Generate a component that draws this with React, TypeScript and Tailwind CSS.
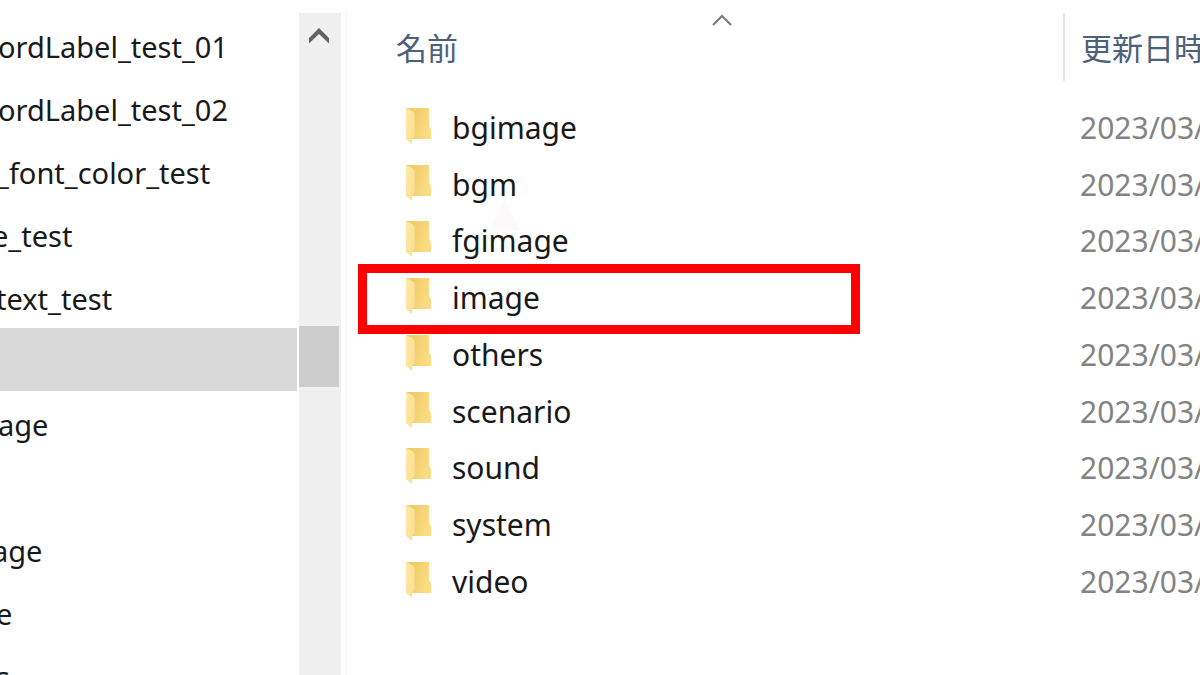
import React from "react";

type TreeItem = { label: string; offset: string; selected?: boolean };

const treeItems: TreeItem[] = [
  { label: "ordLabel_test_01", offset: "-ml-0.5" },
  { label: "ordLabel_test_02", offset: "-ml-0.5" },
  { label: "_font_color_test", offset: "-ml-1" },
  { label: "e_test", offset: "-ml-2" },
  { label: "text_test", offset: "-ml-1" },
  { label: "", offset: "-ml-1", selected: true },
  { label: "age", offset: "-ml-0.5" },
  { label: "", offset: "-ml-1" },
  { label: "age", offset: "-ml-2" },
  { label: "e", offset: "-ml-1" },
  { label: "s", offset: "-ml-1" },
];

const folders = [
  "bgimage",
  "bgm",
  "fgimage",
  "image",
  "others",
  "scenario",
  "sound",
  "system",
  "video",
];

const highlighted = "image";

function FolderIcon() {
  return (
    <svg width="26" height="37" viewBox="0 0 26 37" className="shrink-0" aria-hidden="true">
      <defs>
        <linearGradient id="folder-back" x1="0" y1="0" x2="1" y2="0.3">
          <stop offset="0.25" stopColor="#efcb67" />
          <stop offset="1" stopColor="#fbdc83" />
        </linearGradient>
        <linearGradient id="folder-front" x1="0" y1="0" x2="1" y2="1">
          <stop offset="0" stopColor="#ffe9a8" />
          <stop offset="1" stopColor="#fbdf90" />
        </linearGradient>
      </defs>
      <path d="M1 1H24V19L26 22V32H1Z" fill="url(#folder-back)" />
      <path d="M1 1L8 4.500Q9.500 5.500 9.500 7.500V29L7 32V37L1 32Z" fill="url(#folder-front)" />
    </svg>
  );
}

function Sidebar() {
  return (
    <nav aria-label="Folders" className="w-[297px] shrink-0 overflow-hidden text-[29px]">
      <ul>
        {treeItems.map((item, i) => (
          <li
            key={i}
            className={
              item.selected
                ? "flex h-[63px] items-center bg-[#d9d9d9] pt-1"
                : "flex h-[63px] items-center pt-1"
            }
          >
            <span className={`whitespace-nowrap ${item.offset}`}>{item.label}</span>
          </li>
        ))}
      </ul>
    </nav>
  );
}

function ScrollBar() {
  return (
    <div className="ml-0.5 flex w-[42px] shrink-0 flex-col bg-[#f0f0f0]">
      <button type="button" aria-label="Scroll up" className="flex h-[46px] w-10 items-center justify-center">
        <svg width="20" height="16" viewBox="0 0 20 16" aria-hidden="true">
          <path d="M0 10L10 0L20 10V15.500L10 6L0 15.500Z" fill="#606266" />
        </svg>
      </button>
      <div className="mt-[267px] h-[61px] w-10 bg-[#cdcdcd]" />
    </div>
  );
}

export default function App() {
  return (
    <div className="flex h-screen overflow-hidden bg-white pt-[13px] font-['Noto_Sans','Noto_Sans_CJK_JP',sans-serif] text-[30px] leading-10 text-[#191919]">
      <Sidebar />
      <ScrollBar />
      <main className="relative ml-1 min-w-0 flex-1 border-l-2 border-[#f6fafa] pl-[33px]">
        <svg
          width="30"
          height="32"
          viewBox="0 0 30 32"
          className="absolute left-[143px] top-[185px]"
          aria-hidden="true"
        >
          <path d="M14 0L30 32H0Z" fill="#fcfafa" />
        </svg>
        <table className="relative h-[595px] w-full table-fixed border-collapse">
          <colgroup>
            <col />
            <col className="w-[137px]" />
          </colgroup>
          <thead>
            <tr className="h-[84px] text-left align-top text-[31px] text-[#4c607a]">
              <th scope="col" className="relative p-0 font-normal">
                <svg
                  width="20"
                  height="12"
                  viewBox="0 0 20 12"
                  className="absolute left-1/2 top-px -ml-2.5"
                  aria-hidden="true"
                >
                  <path d="M1 11L10 2L19 11" fill="none" stroke="#77797c" strokeWidth="2" />
                </svg>
                <div className="flex h-[68px] items-center pl-4 pt-0.5">名前</div>
              </th>
              <th scope="col" className="overflow-hidden p-0 font-normal">
                <div className="flex h-[68px] items-center whitespace-nowrap border-l-2 border-[#e5e5e5] pl-4 pt-0.5">
                  更新日時
                </div>
              </th>
            </tr>
          </thead>
          <tbody>
            {folders.map((name) => (
              <tr key={name}>
                <td className="relative p-0 align-middle">
                  <div className="flex items-center gap-[21px] pl-[25px]">
                    <FolderIcon />
                    <span className="pt-[5px]">{name}</span>
                  </div>
                  {name === highlighted && (
                    <div className="pointer-events-none absolute -left-[22px] -top-[3px] h-[70px] w-[502px] border-[9px] border-[#ff0000]" />
                  )}
                </td>
                <td className="overflow-hidden whitespace-nowrap p-0 pl-[17px] pt-[5px] align-middle text-[#838383]">
                  2023/03/
                </td>
              </tr>
            ))}
          </tbody>
        </table>
      </main>
    </div>
  );
}
